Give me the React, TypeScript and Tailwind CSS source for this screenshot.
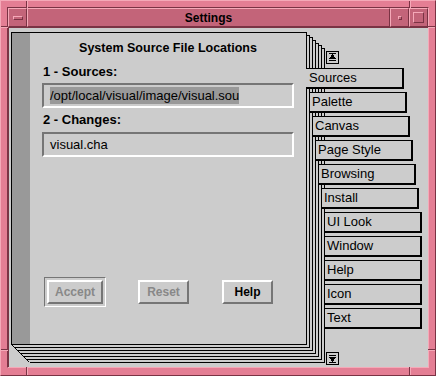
import React from "react";

const tabs = [
  "Sources",
  "Palette",
  "Canvas",
  "Page Style",
  "Browsing",
  "Install",
  "UI Look",
  "Window",
  "Help",
  "Icon",
  "Text",
];

const tabMl = [
  "ml-0",
  "ml-[3px]",
  "ml-[6px]",
  "ml-[9px]",
  "ml-[12px]",
  "ml-[15px]",
  "ml-[18px]",
  "ml-[18px]",
  "ml-[18px]",
  "ml-[18px]",
  "ml-[18px]",
];

const tops = [32, 35, 37, 40, 43, 45, 48];

function StackLines() {
  const segs: string[] = [];
  segs.push(`M11.5 32.5 H306.5 V344.5 H11.5 Z`);
  for (let k = 1; k <= 6; k++) {
    const x = 306 + 3 * k + 0.5;
    const y = 344 + 3 * k + 0.5;
    const t = tops[k] + 0.5;
    const px = 306 + 3 * (k - 1) + 0.5;
    segs.push(`M${px} ${t} H${x} V${y} H${11 + 3 * k + 0.5}`);
  }
  return (
    <svg
      className="absolute left-0 top-0"
      width={419}
      height={339}
      viewBox="9 28 419 339"
    >
      <path d={segs.join(" ")} stroke="#000" strokeWidth={1} fill="none" shapeRendering="crispEdges" />
      <path d="M11.5 344.5 L29.5 362.5" stroke="#000" strokeWidth={1} fill="none" shapeRendering="crispEdges" />
    </svg>
  );
}

function ArrowBtn({ up }: { up: boolean }) {
  return (
    <div className="ml-[20px] w-[13px] h-[13px] border border-black flex items-center justify-center">
      <svg width={11} height={11} viewBox="0 0 11 11" shapeRendering="crispEdges">
        {up ? (
          <>
            <rect x={2} y={1} width={7} height={1} fill="#000" />
            <path d="M5.5 2 L9 7 H2 Z" fill="#000" />
            <rect x={2} y={8} width={7} height={1} fill="#000" />
          </>
        ) : (
          <>
            <rect x={2} y={2} width={7} height={1} fill="#000" />
            <path d="M2 4 H9 L5.5 9 Z" fill="#000" />
            <rect x={2} y={9} width={7} height={1} fill="#000" />
          </>
        )}
      </svg>
    </div>
  );
}

function Field({ children }: { children: React.ReactNode }) {
  return (
    <div className="ml-[12px] w-[252px] h-[25px] border-2 border-t-[#757575] border-l-[#757575] border-b-white border-r-white flex items-center pl-[6px] text-[13px] text-black">
      {children}
    </div>
  );
}

function Btn({ label, disabled, w }: { label: string; disabled?: boolean; w: string }) {
  return (
    <div
      className={
        "h-[24px] border-2 border-t-white border-l-white border-b-[#757575] border-r-[#757575] flex items-center justify-center text-[12px] font-bold " +
        w +
        (disabled ? " text-[#888888]" : " text-black")
      }
    >
      {label}
    </div>
  );
}

export default function App() {
  return (
    <div
      className="relative w-[436px] h-[376px] bg-[#e47e94] border border-t-[#f5a9b8] border-l-[#f5a9b8] border-b-[#7a3344] border-r-[#7a3344] pt-[6px] pl-[6px] pr-[6px] pb-[7px] flex flex-col"
      style={{ fontFamily: "'Liberation Sans', Arial, sans-serif" }}
    >
      {/* corner grooves */}
      <div className="absolute left-[25px] top-0 w-[2px] h-[7px] border-l border-l-[#7a3344] border-r border-r-[#f5a9b8]" />
      <div className="absolute left-[408px] top-0 w-[2px] h-[7px] border-l border-l-[#7a3344] border-r border-r-[#f5a9b8]" />
      <div className="absolute left-[25px] bottom-0 w-[2px] h-[8px] border-l border-l-[#7a3344] border-r border-r-[#f5a9b8]" />
      <div className="absolute left-[408px] bottom-0 w-[2px] h-[8px] border-l border-l-[#7a3344] border-r border-r-[#f5a9b8]" />
      <div className="absolute left-0 top-[25px] w-[7px] h-[2px] border-t border-t-[#7a3344] border-b border-b-[#f5a9b8]" />
      <div className="absolute right-0 top-[25px] w-[7px] h-[2px] border-t border-t-[#7a3344] border-b border-b-[#f5a9b8]" />
      <div className="absolute left-0 top-[348px] w-[7px] h-[2px] border-t border-t-[#7a3344] border-b border-b-[#f5a9b8]" />
      <div className="absolute right-0 top-[348px] w-[7px] h-[2px] border-t border-t-[#7a3344] border-b border-b-[#f5a9b8]" />

      <div className="flex-1 flex flex-col border border-t-[#7a3344] border-l-[#7a3344] border-b-[#f5a9b8] border-r-[#f5a9b8]">
        {/* title bar */}
        <div className="h-[19px] flex">
          <div className="w-[19px] h-full bg-[#c36479] border border-t-[#f5a9b8] border-l-[#f5a9b8] border-b-[#7a3344] border-r-[#7a3344] flex items-center justify-center">
            <div className="w-[10px] h-[4px] border border-t-[#f5a9b8] border-l-[#f5a9b8] border-b-[#7a3344] border-r-[#7a3344]" />
          </div>
          <div className="flex-1 h-full bg-[#c36479] border border-t-[#f5a9b8] border-l-[#f5a9b8] border-b-[#7a3344] border-r-[#7a3344] flex items-center justify-center text-[12px] font-bold text-black">
            Settings
          </div>
          <div className="w-[19px] h-full bg-[#c36479] border border-t-[#f5a9b8] border-l-[#f5a9b8] border-b-[#7a3344] border-r-[#7a3344] flex items-center justify-center">
            <div className="w-[4px] h-[4px] border border-t-[#f5a9b8] border-l-[#f5a9b8] border-b-[#7a3344] border-r-[#7a3344]" />
          </div>
          <div className="w-[19px] h-full bg-[#c36479] border border-t-[#f5a9b8] border-l-[#f5a9b8] border-b-[#7a3344] border-r-[#7a3344] flex items-center justify-center">
            <div className="w-[11px] h-[11px] border border-t-[#f5a9b8] border-l-[#f5a9b8] border-b-[#7a3344] border-r-[#7a3344]" />
          </div>
        </div>

        {/* client */}
        <div className="flex-1 flex border-t border-l border-t-[#7a3344] border-l-[#7a3344]">
          <div className="relative flex-1 bg-[#cccccc] flex">
            <StackLines />
            {/* front page */}
            <div className="relative ml-[3px] mt-[5px] w-[294px] h-[311px] flex">
              <div className="w-[18px] h-full bg-[#999999]" />
              <div className="flex-1 flex flex-col pb-[37px]">
                <div className="mt-[8px] leading-[15px] text-center text-[12.5px] font-bold text-black">
                  System Source File Locations
                </div>
                <div className="mt-[8px] pl-[13px] leading-[15px] text-[13px] font-bold text-black">
                  1 - Sources:
                </div>
                <div className="mt-[4px]">
                  <Field>
                    <span className="bg-[#999999] leading-[17px]">/opt/local/visual/image/visual.sou</span>
                  </Field>
                </div>
                <div className="mt-[4px] pl-[13px] leading-[15px] text-[13px] font-bold text-black">
                  2 - Changes:
                </div>
                <div className="mt-[5px]">
                  <Field>visual.cha</Field>
                </div>
                <div className="mt-auto flex items-center">
                  <div className="ml-[14px] p-[2px] border border-t-[#757575] border-l-[#757575] border-b-white border-r-white">
                    <Btn label="Accept" disabled w="w-[56px]" />
                  </div>
                  <div className="ml-[32px]">
                    <Btn label="Reset" disabled w="w-[51px]" />
                  </div>
                  <div className="ml-[33px]">
                    <Btn label="Help" w="w-[51px]" />
                  </div>
                </div>
              </div>
            </div>
            {/* tab column */}
            <div className="relative flex-1 flex flex-col pt-[23px] pb-[2px]">
              <ArrowBtn up />
              <div className="mt-[4px] flex flex-col gap-[3px]">
                {tabs.map((t, i) => (
                  <div
                    key={t}
                    className={
                      tabMl[i] +
                      " w-[98px] h-[21px] bg-[#cccccc] border-t border-b-2 border-r-2 border-black flex items-center text-[13px] text-black " +
                      (i === 0 ? "pl-[3px]" : "border-l pl-[2px]")
                    }
                  >
                    {t}
                  </div>
                ))}
              </div>
              <div className="mt-auto">
                <ArrowBtn up={false} />
              </div>
            </div>
          </div>
        </div>
      </div>
    </div>
  );
}
